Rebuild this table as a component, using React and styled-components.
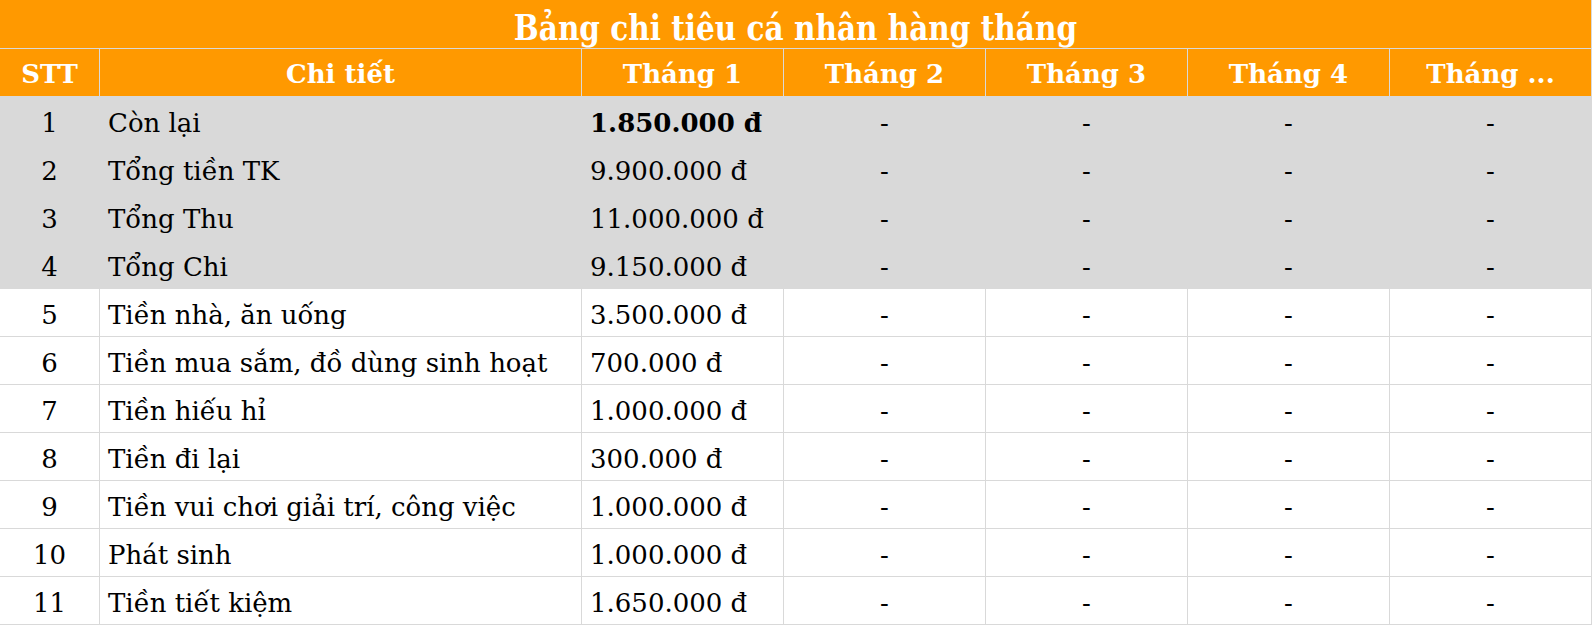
import React from "react";
import styled, { createGlobalStyle } from "styled-components";

const GlobalStyle = createGlobalStyle`
  html, body {
    margin: 0;
    padding: 0;
    background: #ffffff;
  }
  body {
    font-family: "DejaVu Serif", "Liberation Serif", serif;
    color: #000;
  }
`;

const ORANGE = "#ff9900";
const LINE = "#d9d9d9";

const Sheet = styled.div`
  display: grid;
  grid-template-columns: 99px 481px repeat(5, 201px);
  grid-template-rows: 48px;
  grid-auto-rows: 47px;
  gap: 1px;
  width: 1592px;
  box-sizing: border-box;
  padding: 0 1px 1px 0;
  background: ${LINE};
`;

const TitleCell = styled.div`
  grid-column: 1 / -1;
  background: ${ORANGE};
  display: flex;
  align-items: center;
  justify-content: center;
  box-sizing: border-box;
  padding-top: 6px;
  overflow: hidden;
`;

const TitleText = styled.h1`
  margin: 0;
  font-size: 36px;
  font-weight: 700;
  color: #fff;
  white-space: nowrap;
  transform: scaleX(0.82);
  line-height: 1;
`;

const HeadCell = styled.div`
  background: ${ORANGE};
  color: #fff;
  font-weight: 700;
  font-size: 26px;
  display: flex;
  align-items: center;
  justify-content: center;
  box-sizing: border-box;
  padding-top: 3px;
  white-space: nowrap;
`;

const Cell = styled.div`
  background: ${(p) => (p.$shade ? LINE : "#ffffff")};
  font-size: 26px;
  font-weight: ${(p) => (p.$bold ? 700 : 400)};
  display: flex;
  align-items: center;
  justify-content: ${(p) => (p.$align === "center" ? "center" : "flex-start")};
  padding-left: ${(p) => (p.$align === "center" ? "0" : "8px")};
  padding-top: 4px;
  box-sizing: border-box;
  white-space: nowrap;
`;

const headers = ["STT", "Chi tiết", "Tháng 1", "Tháng 2", "Tháng 3", "Tháng 4", "Tháng ..."];

const rows = [
  ["Còn lại", "1.850.000 đ", true],
  ["Tổng tiền TK", "9.900.000 đ"],
  ["Tổng Thu", "11.000.000 đ"],
  ["Tổng Chi", "9.150.000 đ"],
  ["Tiền nhà, ăn uống", "3.500.000 đ"],
  ["Tiền mua sắm, đồ dùng sinh hoạt", "700.000 đ"],
  ["Tiền hiếu hỉ", "1.000.000 đ"],
  ["Tiền đi lại", "300.000 đ"],
  ["Tiền vui chơi giải trí, công việc", "1.000.000 đ"],
  ["Phát sinh", "1.000.000 đ"],
  ["Tiền tiết kiệm", "1.650.000 đ"],
];

export default function App() {
  return (
    <>
      <GlobalStyle />
      <Sheet>
        <TitleCell>
          <TitleText>Bảng chi tiêu cá nhân hàng tháng</TitleText>
        </TitleCell>
        {headers.map((h) => (
          <HeadCell key={h}>{h}</HeadCell>
        ))}
        {rows.map(([label, amount, bold], i) => {
          const shade = i < 4;
          return (
            <React.Fragment key={label}>
              <Cell $shade={shade} $align="center">{i + 1}</Cell>
              <Cell $shade={shade}>{label}</Cell>
              <Cell $shade={shade} $bold={bold}>{amount}</Cell>
              {[2, 3, 4, 5].map((m) => (
                <Cell key={m} $shade={shade} $align="center">-</Cell>
              ))}
            </React.Fragment>
          );
        })}
      </Sheet>
    </>
  );
}
